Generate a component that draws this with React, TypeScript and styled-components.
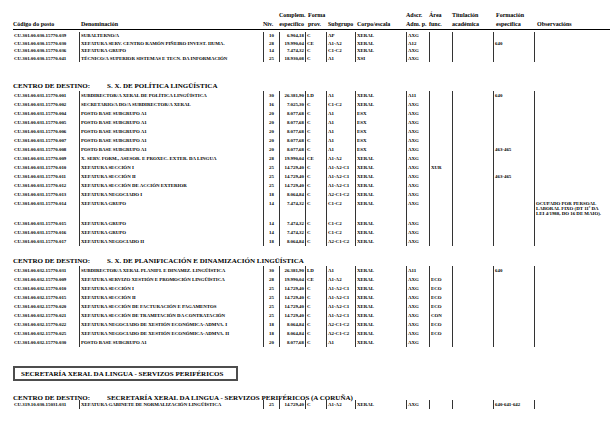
import React from "react";
import styled, { createGlobalStyle } from "styled-components";

type Post = {
  code: string;
  name: string;
  niv: string;
  comp: string;
  forma: string;
  sub: string;
  corpo: string;
  adscr: string;
  area?: string;
  form?: string;
  obs?: string[];
};

const COLS = "66px 184px 16px 26px 21px 29px 51px 23px 23px 41px 41px 76px";

const GlobalStyle = createGlobalStyle`
  html, body {
    margin: 0;
    padding: 0;
    background: #ffffff;
  }
  body {
    font-family: "Liberation Serif", "Times New Roman", serif;
    color: #000000;
  }
`;

const Page = styled.div`
  width: 615px;
  height: 439px;
  box-sizing: border-box;
  padding: 11px 5px 0 13px;
  overflow: hidden;
`;

const HeaderGrid = styled.div`
  display: grid;
  grid-template-columns: ${COLS};
  border-bottom: 1px solid #000;
  font-size: 6px;
  font-weight: bold;
  line-height: 9px;
  white-space: nowrap;
`;

const HeadCell = styled.div<{ $right?: boolean; $pad?: number }>`
  padding-left: ${(p) => p.$pad ?? 0}px;
  padding-right: ${(p) => (p.$right ? 1 : 0)}px;
  text-align: ${(p) => (p.$right ? "right" : "left")};
  direction: ${(p) => (p.$right ? "rtl" : "ltr")};
  span {
    display: block;
    height: 9px;
    direction: ltr;
    unicode-bidi: isolate;
  }
`;

const Rows = styled.div<{ $top?: number; $pitch?: number }>`
  margin-top: ${(p) => p.$top ?? 0}px;
  --pitch: ${(p) => p.$pitch ?? 9}px;
`;

const Row = styled.div`
  display: grid;
  grid-template-columns: ${COLS};
  font-size: 4.9px;
  font-weight: bold;
  line-height: var(--pitch);
  white-space: nowrap;
`;

const Cell = styled.div<{ $line?: boolean; $align?: "left" | "center" | "right" }>`
  border-left: ${(p) => (p.$line ? "1px solid #333" : "none")};
  padding: 0 1px;
  text-align: ${(p) => p.$align ?? "left"};
  overflow: visible;
`;

const Obs = styled(Cell)`
  white-space: normal;
  line-height: 5px;
  padding-top: 2px;
  padding-bottom: 3px;
`;

const SectionTitle = styled.div<{ $top: number }>`
  display: flex;
  margin-top: ${(p) => p.$top}px;
  font-size: 7px;
  font-weight: bold;
  line-height: 10px;
  white-space: nowrap;
`;

const TitleLabel = styled.span`
  width: 94px;
  flex: none;
`;

const Boxed = styled.div`
  display: inline-block;
  margin-top: 19px;
  border: 2px solid #4d4d4d;
  padding: 1px 13px 0 6px;
  font-size: 7px;
  font-weight: bold;
  line-height: 10px;
  white-space: nowrap;
`;

const sec1: Post[] = [
  { code: "CU.301.00.030.15770.039", name: "SUBALTERNO/A", niv: "10", comp: "6.904,18", forma: "C", sub: "AP", corpo: "XERAL", adscr: "AXG" },
  { code: "CU.301.00.030.15770.030", name: "XEFATURA SERV. CENTRO RAMÓN PIÑEIRO INVEST. HUMA.", niv: "28", comp: "19.990,04", forma: "CE", sub: "A1-A2", corpo: "XERAL", adscr: "A12", form: "640" },
  { code: "CU.301.00.030.15770.036", name: "XEFATURA GRUPO", niv: "14", comp: "7.474,32", forma: "C", sub: "C1-C2", corpo: "XERAL", adscr: "AXG" },
  { code: "CU.301.00.030.15770.041", name: "TÉCNICO/A SUPERIOR SISTEMAS E TECN. DA INFORMACIÓN", niv: "25", comp: "18.930,08", forma: "C", sub: "A1", corpo: "XSI", adscr: "AXG" },
];

const base = (n: string): Post => ({
  code: `CU.301.00.031.15770.${n}`,
  name: "POSTO BASE SUBGRUPO A1",
  niv: "20",
  comp: "8.077,68",
  forma: "C",
  sub: "A1",
  corpo: "ESX",
  adscr: "AXG",
});

const grupo = (n: string): Post => ({
  code: `CU.301.00.031.15770.${n}`,
  name: "XEFATURA GRUPO",
  niv: "14",
  comp: "7.474,32",
  forma: "C",
  sub: "C1-C2",
  corpo: "XERAL",
  adscr: "AXG",
});

const sec2: Post[] = [
  { code: "CU.301.00.031.15770.001", name: "SUBDIRECTOR/A XERAL DE POLÍTICA LINGÜÍSTICA", niv: "30", comp: "26.381,90", forma: "LD", sub: "A1", corpo: "XERAL", adscr: "A11", form: "640" },
  { code: "CU.301.00.031.15770.002", name: "SECRETARIO/A DO/A SUBDIRECTOR/A XERAL", niv: "16", comp: "7.025,30", forma: "C", sub: "C1-C2", corpo: "XERAL", adscr: "AXG" },
  base("004"),
  base("005"),
  base("006"),
  base("007"),
  { ...base("008"), form: "463-465" },
  { code: "CU.301.00.031.15770.009", name: "X. SERV. FORM., ASESOR. E PROXEC. EXTER. DA LINGUA", niv: "28", comp: "19.990,04", forma: "CE", sub: "A1-A2", corpo: "XERAL", adscr: "AXG" },
  { code: "CU.301.00.031.15770.010", name: "XEFATURA SECCIÓN I", niv: "25", comp: "14.729,40", forma: "C", sub: "A1-A2-C1", corpo: "XERAL", adscr: "AXG", area: "XUR" },
  { code: "CU.301.00.031.15770.011", name: "XEFATURA SECCIÓN II", niv: "25", comp: "14.729,40", forma: "C", sub: "A1-A2-C1", corpo: "XERAL", adscr: "AXG", form: "463-465" },
  { code: "CU.301.00.031.15770.012", name: "XEFATURA SECCIÓN DE ACCIÓN EXTERIOR", niv: "25", comp: "14.729,40", forma: "C", sub: "A1-A2-C1", corpo: "XERAL", adscr: "AXG" },
  { code: "CU.301.00.031.15770.013", name: "XEFATURA NEGOCIADO I", niv: "18", comp: "8.064,84", forma: "C", sub: "A2-C1-C2", corpo: "XERAL", adscr: "AXG" },
  { ...grupo("014"), obs: ["OCUPADO POR PERSOAL", "LABORAL FIXO (DT 11ª DA", "LEI 4/1988, DO 16 DE MAIO)."] },
  grupo("015"),
  grupo("016"),
  { code: "CU.301.00.031.15770.017", name: "XEFATURA NEGOCIADO II", niv: "18", comp: "8.064,84", forma: "C", sub: "A2-C1-C2", corpo: "XERAL", adscr: "AXG" },
];

const sec3: Post[] = [
  { code: "CU.301.00.032.15770.031", name: "SUBDIRECTOR/A XERAL PLANIFI. E DINAMIZ. LINGÜÍSTICA", niv: "30", comp: "26.381,90", forma: "LD", sub: "A1", corpo: "XERAL", adscr: "A11", form: "640" },
  { code: "CU.301.00.032.15770.009", name: "XEFATURA SERVIZO XESTIÓN E PROMOCIÓN LINGÜÍSTICA", niv: "28", comp: "19.990,04", forma: "CE", sub: "A1-A2", corpo: "XERAL", adscr: "AXG", area: "ECO" },
  { code: "CU.301.00.032.15770.010", name: "XEFATURA SECCIÓN I", niv: "25", comp: "14.729,40", forma: "C", sub: "A1-A2-C1", corpo: "XERAL", adscr: "AXG", area: "ECO" },
  { code: "CU.301.00.032.15770.015", name: "XEFATURA SECCIÓN II", niv: "25", comp: "14.729,40", forma: "C", sub: "A1-A2-C1", corpo: "XERAL", adscr: "AXG", area: "ECO" },
  { code: "CU.301.00.032.15770.020", name: "XEFATURA SECCIÓN DE FACTURACIÓN E PAGAMENTOS", niv: "25", comp: "14.729,40", forma: "C", sub: "A1-A2-C1", corpo: "XERAL", adscr: "AXG", area: "ECO" },
  { code: "CU.301.00.032.15770.021", name: "XEFATURA SECCIÓN DE TRAMITACIÓN DA CONTRATACIÓN", niv: "25", comp: "14.729,40", forma: "C", sub: "A1-A2-C1", corpo: "XERAL", adscr: "AXG", area: "CON" },
  { code: "CU.301.00.032.15770.022", name: "XEFATURA NEGOCIADO DE XESTIÓN ECONÓMICA-ADMVA. I", niv: "18", comp: "8.064,84", forma: "C", sub: "A2-C1-C2", corpo: "XERAL", adscr: "AXG", area: "ECO" },
  { code: "CU.301.00.032.15770.025", name: "XEFATURA NEGOCIADO DE XESTIÓN ECONÓMICA-ADMVA. II", niv: "18", comp: "8.064,84", forma: "C", sub: "A2-C1-C2", corpo: "XERAL", adscr: "AXG", area: "ECO" },
  { code: "CU.301.00.032.15770.030", name: "POSTO BASE SUBGRUPO A1", niv: "20", comp: "8.077,68", forma: "C", sub: "A1", corpo: "XERAL", adscr: "AXG" },
];

const sec4: Post[] = [
  { code: "CU.319.10.030.15031.031", name: "XEFATURA GABINETE DE NORMALIZACIÓN LINGÜÍSTICA", niv: "25", comp: "14.729,40", forma: "C", sub: "A1-A2", corpo: "XERAL", adscr: "AXG", form: "640-641-642" },
];

const PostRow = ({ p }: { p: Post }) => (
  <Row>
    <Cell>{p.code}</Cell>
    <Cell $line>{p.name}</Cell>
    <Cell $line $align="center">{p.niv}</Cell>
    <Cell $line $align="right">{p.comp}</Cell>
    <Cell $line>{p.forma}</Cell>
    <Cell $line>{p.sub}</Cell>
    <Cell $line>{p.corpo}</Cell>
    <Cell $line>{p.adscr}</Cell>
    <Cell $line>{p.area}</Cell>
    <Cell $line />
    <Cell $line>{p.form}</Cell>
    {p.obs ? (
      <Obs $line>
        {p.obs.map((l, i) => (
          <div key={i}>{l}</div>
        ))}
      </Obs>
    ) : (
      <Cell $line />
    )}
  </Row>
);

const Header = () => (
  <HeaderGrid>
    <HeadCell><span /><span>Código do posto</span></HeadCell>
    <HeadCell $pad={2}><span /><span>Denominación</span></HeadCell>
    <HeadCell><span /><span>Nív.</span></HeadCell>
    <HeadCell $right><span>Complem.</span><span>específico</span></HeadCell>
    <HeadCell $pad={3}><span>Forma</span><span>prov.</span></HeadCell>
    <HeadCell $pad={2}><span /><span>Subgrupo</span></HeadCell>
    <HeadCell $pad={2}><span /><span>Corpo/escala</span></HeadCell>
    <HeadCell><span>Adscr.</span><span>Adm. p.</span></HeadCell>
    <HeadCell><span>Área</span><span>func.</span></HeadCell>
    <HeadCell><span>Titulación</span><span>académica</span></HeadCell>
    <HeadCell $pad={3}><span>Formación</span><span>específica</span></HeadCell>
    <HeadCell $pad={3}><span /><span>Observacións</span></HeadCell>
  </HeaderGrid>
);

const Title = ({ value, top }: { value: string; top: number }) => (
  <SectionTitle $top={top}>
    <TitleLabel>CENTRO DE DESTINO:</TitleLabel>
    <span>{value}</span>
  </SectionTitle>
);

export default function App() {
  return (
    <Page>
      <GlobalStyle />
      <Header />
      <Rows $top={2} $pitch={7.5}>
        {sec1.map((p) => (
          <PostRow key={p.code} p={p} />
        ))}
      </Rows>
      <Title top={19} value="S. X. DE POLÍTICA LINGÜÍSTICA" />
      <Rows>
        {sec2.map((p) => (
          <PostRow key={p.code} p={p} />
        ))}
      </Rows>
      <Title top={10} value="S. X. DE PLANIFICACIÓN E DINAMIZACIÓN LINGÜÍSTICA" />
      <Rows>
        {sec3.map((p) => (
          <PostRow key={p.code} p={p} />
        ))}
      </Rows>
      <Boxed>SECRETARÍA XERAL DA LINGUA - SERVIZOS PERIFÉRICOS</Boxed>
      <Title top={12} value="SECRETARÍA XERAL DA LINGUA - SERVIZOS PERIFÉRICOS (A CORUÑA)" />
      <Rows $top={-3}>
        {sec4.map((p) => (
          <PostRow key={p.code} p={p} />
        ))}
      </Rows>
    </Page>
  );
}
